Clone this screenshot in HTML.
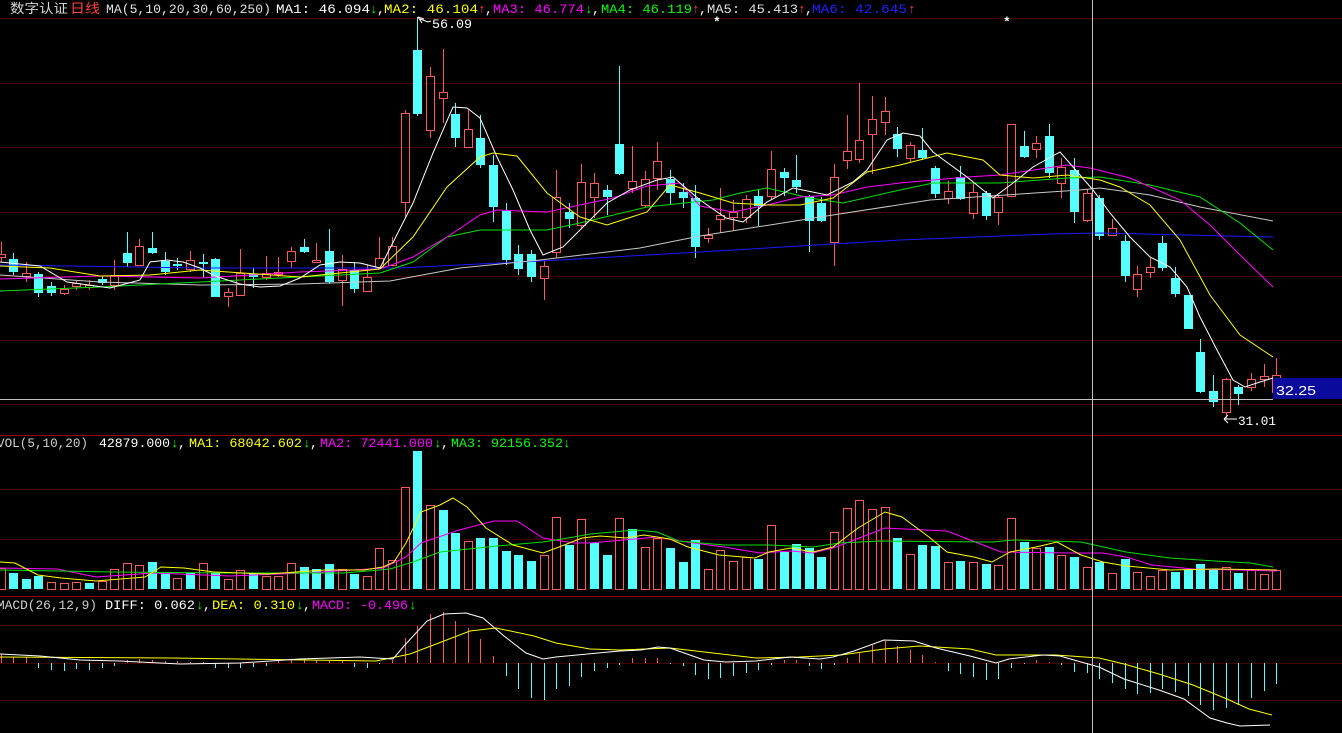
<!DOCTYPE html>
<html><head><meta charset="utf-8">
<style>
html,body{margin:0;padding:0;background:#000;width:1342px;height:733px;overflow:hidden}
svg{display:block}
text{font-family:"Liberation Mono","Noto Sans CJK SC",monospace;font-size:13px}
</style></head>
<body>
<svg id="s" width="1342" height="733" xmlns="http://www.w3.org/2000/svg">
<rect width="1342" height="733" fill="#000"/>
<g id="g"></g>
<text x="10" y="13" textLength="58" lengthAdjust="spacingAndGlyphs" fill="#d8d8d8" style="font-family:'Noto Sans CJK SC',sans-serif">数字认证</text>
<text x="70" y="13" textLength="30" lengthAdjust="spacingAndGlyphs" fill="#ff4040" style="font-family:'Noto Sans CJK SC',sans-serif">日线</text>
<text x="106" y="13" textLength="165" lengthAdjust="spacingAndGlyphs" fill="#e0e0e0">MA(5,10,20,30,60,250)</text>
<text x="276" y="13" textLength="94" lengthAdjust="spacingAndGlyphs" fill="#fff">MA1: 46.094</text>
<text x="370" y="13" fill="#00ff00">↓</text><text x="377" y="13" fill="#fff">,</text>
<text x="384" y="13" textLength="94" lengthAdjust="spacingAndGlyphs" fill="#ffff00">MA2: 46.104</text>
<text x="478" y="13" fill="#ff4040">↑</text><text x="485" y="13" fill="#fff">,</text>
<text x="493" y="13" textLength="91" lengthAdjust="spacingAndGlyphs" fill="#ff00ff">MA3: 46.774</text>
<text x="585" y="13" fill="#00ff00">↓</text><text x="592" y="13" fill="#fff">,</text>
<text x="601" y="13" textLength="91" lengthAdjust="spacingAndGlyphs" fill="#00ff00">MA4: 46.119</text>
<text x="692" y="13" fill="#ff4040">↑</text><text x="699" y="13" fill="#fff">,</text>
<text x="707" y="13" textLength="91" lengthAdjust="spacingAndGlyphs" fill="#e0e0e0">MA5: 45.413</text>
<text x="798" y="13" fill="#ff4040">↑</text><text x="805" y="13" fill="#fff">,</text>
<text x="812" y="13" textLength="95" lengthAdjust="spacingAndGlyphs" fill="#2020ff">MA6: 42.645</text>
<text x="908" y="13" fill="#ff4040">↑</text>
<text x="713" y="26" fill="#fff" font-size="16" font-weight="bold">*</text>
<text x="1003" y="26" fill="#fff" font-size="16" font-weight="bold">*</text>
<text x="-3" y="447" textLength="91" lengthAdjust="spacingAndGlyphs" fill="#d0d0d0">VOL(5,10,20)</text>
<text x="99" y="447" textLength="71" lengthAdjust="spacingAndGlyphs" fill="#fff">42879.000</text>
<text x="171" y="447" fill="#00ff00">↓</text><text x="178" y="447" fill="#fff">,</text>
<text x="189" y="447" textLength="113" lengthAdjust="spacingAndGlyphs" fill="#ffff00">MA1: 68042.602</text>
<text x="303" y="447" fill="#00ff00">↓</text><text x="310" y="447" fill="#fff">,</text>
<text x="320" y="447" textLength="113" lengthAdjust="spacingAndGlyphs" fill="#ff00ff">MA2: 72441.000</text>
<text x="434" y="447" fill="#00ff00">↓</text><text x="441" y="447" fill="#fff">,</text>
<text x="451" y="447" textLength="112" lengthAdjust="spacingAndGlyphs" fill="#00ff00">MA3: 92156.352</text>
<text x="563" y="447" fill="#00ff00">↓</text>
<text x="-3" y="609" textLength="100" lengthAdjust="spacingAndGlyphs" fill="#d0d0d0">MACD(26,12,9)</text>
<text x="105" y="609" textLength="90" lengthAdjust="spacingAndGlyphs" fill="#fff">DIFF: 0.062</text>
<text x="196" y="609" fill="#00ff00">↓</text><text x="203" y="609" fill="#fff">,</text>
<text x="212" y="609" textLength="83" lengthAdjust="spacingAndGlyphs" fill="#ffff00">DEA: 0.310</text>
<text x="296" y="609" fill="#00ff00">↓</text><text x="303" y="609" fill="#fff">,</text>
<text x="312" y="609" textLength="96" lengthAdjust="spacingAndGlyphs" fill="#ff00ff">MACD: -0.496</text>
<text x="409" y="609" fill="#00ff00">↓</text>
<path d="M418 17 L422 23 M418 17 L424 19 M420 19 L428 22 L431 21" stroke="#fff" fill="none"/>
<text x="432" y="28" textLength="40" lengthAdjust="spacingAndGlyphs" fill="#fff">56.09</text>
<path d="M1224 419 L1237 419 M1224 419 L1228 415 M1224 419 L1228 423" stroke="#fff" fill="none"/>
<text x="1238" y="425" textLength="38" lengthAdjust="spacingAndGlyphs" fill="#fff">31.01</text>
<rect x="1273" y="378" width="69" height="21" fill="#0a0a9c"/>
<text x="1276" y="395" font-size="15" textLength="40" lengthAdjust="spacingAndGlyphs" fill="#fff" style="font-family:'Liberation Sans',sans-serif">32.25</text>
</svg>
<script>
var g=document.getElementById("g"),h="";
function L(x1,y1,x2,y2,c,w){h+='<line x1="'+x1+'" y1="'+y1+'" x2="'+x2+'" y2="'+y2+'" stroke="'+c+'" stroke-width="'+(w||1)+'"/>';}
function P(pts,c){h+='<polyline fill="none" stroke="'+c+'" stroke-width="1" points="'+pts+'"/>';}
var GR="#480000",SEP="#a00000";
[18,83,147,212,276,340,404,489,539,625,663,700].forEach(function(y){L(0,y+.5,1342,y+.5,GR);});
L(0,435.5,1342,435.5,SEP);L(0,596.5,1342,596.5,SEP);
var R="#ff5a5a",C="#55ffff";
var K=[["r",254,257,242,262],["c",259,272,253,275],["r",273,276,262,282],["c",274,293,272,297],["c",286,293,282,296],["r",289,293,285,295],["r",283,286,281,290],["r",285,287,280,290],["c",279,283,276,285],["r",275,285,260,290],
["c",253,263,232,267],["r",246,265,239,266],["c",248,253,232,254],["c",261,272,252,275],["c",264,266,258,270],["r",260,269,251,272],["c",262,264,254,277],["c",259,297,258,297],["r",292,296,288,307],["r",273,295,249,296],
["c",274,277,268,288],["r",273,277,256,280],["r",272,274,257,277],["r",251,261,247,268],["c",247,252,239,253],["r",260,262,243,262],["c",251,282,229,284],["r",269,280,255,306],["c",270,289,262,293],["r",277,291,265,291],
["r",258,267,237,268],["r",246,265,237,266],["r",113,202,110,217],["c",50,114,17,116],["r",76,130,67,138],["r",92,98,49,123],["c",114,138,103,147],["r",129,147,110,148],["c",138,165,115,168],["c",165,207,155,222],
["c",211,260,203,265],["c",254,269,245,275],["c",254,277,250,282],["r",266,278,261,300],["r",197,252,170,258],["c",212,219,203,228],["r",182,225,164,228],["r",183,197,173,218],["c",190,197,185,215],["c",144,174,66,175],
["r",181,188,146,193],["r",179,205,171,207],["r",161,178,142,190],["c",179,193,170,205],["c",192,198,183,208],["c",198,247,185,258],["r",235,238,228,243],["r",215,219,188,233],["r",212,217,200,230],["r",199,217,195,223],
["c",196,206,190,226],["r",169,196,151,200],["c",172,178,168,196],["c",180,187,155,193],["c",196,221,195,252],["c",203,221,197,222],["r",177,242,164,266],["r",151,160,115,169],["r",140,159,83,163],["r",119,134,96,174],
["r",111,122,97,135],["c",134,149,127,157],["r",145,158,142,162],["c",150,158,128,160],["c",168,194,166,198],["r",191,198,181,204],["c",177,199,166,200],["r",192,213,182,219],["c",193,216,191,220],["r",197,212,196,225],
["r",124,196,124,196],["c",146,157,131,158],["r",143,149,136,158],["c",136,173,124,178],["r",167,183,158,198],["c",170,212,158,223],["r",193,220,189,222],["c",198,236,195,240],["r",228,235,219,235],["c",241,276,235,282],
["r",274,289,266,297],["r",267,272,258,278],["c",243,268,236,271],["c",278,294,267,297],["c",295,329,295,329],["c",352,392,339,393],["c",391,402,375,407],["r",379,412,378,419],["c",387,394,385,405],["r",379,387,373,391],
["r",376,379,364,387],["r",375,392,358,393]];
var V="r568 c573 c579 c576 r582 r583 r582 c583 r581 r569 r563 r565 c562 c572 r578 c573 r563 c573 r579 r570 c573 r576 r576 r563 c567 c569 c564 r569 c574 r576 r548 r560 r487 c451 r505 c510 c533 r541 c538 c538 c551 c555 c561 r555 r517 c545 r519 c543 c555 r518 c529 r547 r538 c548 c562 c540 r569 r550 r561 r557 c559 r525 c552 c544 c548 c557 r532 r508 r500 r509 r507 c538 r554 c545 c546 r562 c561 r562 c564 r565 r518 c542 r548 c547 r555 c557 r567 c562 r573 c559 r572 r576 r570 c572 c570 c564 c570 r567 c573 r570 r574 r570".split(" ");
var M=[654,657,657,668,670,671,669,670,668,666,660,659,660,661,661,662,662,668,668,668,667,666,660,660,659,660,661,660,667,668,664,660,638,626,614,612,621,628,639,656,676,689,698,700,689,686,677,671,668,665,658,658,658,664,666,675,679,678,676,673,670,665,660,660,666,669,665,658,652,645,641,646,650,655,662,671,674,677,680,679,668,664,660,662,665,672,673,679,683,689,694,693,689,692,696,705,710,708,705,698,691,684];
for(var i=0;i<K.length;i++){
 var x=Math.round(0.5+12.63*i)+.5,k=K[i],col=k[0]=="r"?R:C;
 if(k[0]=="c"){L(x,k[3],x,k[4],col);h+='<rect x="'+(x-4.5)+'" y="'+k[1]+'" width="9" height="'+Math.max(1,k[2]-k[1])+'" fill="'+col+'"/>';}
 else{ if(k[3]<k[1])L(x,k[3],x,k[1],col); if(k[4]>k[2])L(x,k[2],x,k[4],col);
  h+='<rect x="'+(x-4)+'" y="'+(k[1]+.5)+'" width="8" height="'+Math.max(1,k[2]-k[1])+'" fill="none" stroke="'+col+'"/>';}
 var v=V[i],vt=+v.slice(1);
 if(v[0]=="c")h+='<rect x="'+(x-4.5)+'" y="'+vt+'" width="9" height="'+(589-vt)+'" fill="'+C+'"/>';
 else h+='<rect x="'+(x-4)+'" y="'+(vt+.5)+'" width="8" height="'+(589-vt)+'" fill="none" stroke="'+R+'"/>';
 var m=M[i];if(Math.abs(m-663)>0)L(x,663,x,m,m<663?R:C);
}
P("0,265 200,268 400,268 560,260 700,252 900,240 1050,234 1100,233 1273,237","#1a1aff");
P("0,275 100,282 200,285 300,284 390,281 460,268 540,260 640,248 700,236 833,215 930,200 1080,190 1100,188 1150,195 1200,207 1273,221","#c8c8c8");
P("0,291 100,287 200,282 300,277 380,273 413,262 447,237 480,230 547,230 580,223 647,207 713,200 740,193 767,188 810,198 843,203 900,190 933,183 1000,183 1067,178 1100,177 1150,185 1200,197 1240,223 1273,250","#00e000");
P("0,279 100,276 200,278 300,272 380,269 413,257 447,237 480,215 497,210 547,212 580,205 613,198 647,186 680,183 700,206 733,212 767,205 800,197 833,195 867,187 900,183 967,177 1000,175 1067,165 1090,168 1130,178 1180,200 1210,225 1240,255 1273,287","#ff00ff");
P("0,266 50,268 100,276 150,275 200,270 300,277 380,269 413,237 447,187 480,157 493,153 517,156 547,193 580,217 607,225 647,212 670,185 700,193 733,203 767,205 800,205 833,198 867,172 900,165 947,153 983,160 1000,175 1033,178 1067,175 1100,180 1120,187 1150,205 1180,240 1210,295 1240,335 1273,357","#ffff00");
P("0,262 40,266 67,282 110,288 140,280 150,262 167,260 183,262 200,268 215,276 240,284 260,287 280,286 300,278 320,265 340,262 360,263 380,268 413,203 433,153 453,107 467,108 480,118 497,157 513,190 530,230 543,255 563,247 587,223 607,203 630,190 657,180 673,177 700,200 726,218 743,222 767,202 793,188 827,195 853,182 867,170 887,140 903,133 920,136 933,152 967,177 993,198 1013,183 1033,167 1060,152 1093,190 1110,213 1130,237 1150,257 1170,267 1187,287 1200,317 1217,350 1233,380 1245,387 1260,382 1273,378","#fff");
P("0,568 57,569 96,577 153,573 230,576 306,573 383,568 406,557 421,543 459,530 494,521 517,521 543,538 574,543 590,543 657,537 679,541 724,547 760,553 791,551 813,553 836,547 862,537 885,528 947,531 978,543 1001,552 1072,553 1103,553 1126,557 1152,565 1193,569 1277,571","#ff00ff");
P("0,570 115,572 230,573 344,573 390,569 413,562 440,552 497,546 543,542 574,537 590,534 635,530 657,532 679,541 724,545 769,545 813,547 840,543 880,541 992,542 1014,540 1081,542 1126,552 1170,558 1215,561 1251,563 1273,567","#00e000");
P("0,562 15,563 38,575 61,578 96,581 145,577 161,567 184,568 214,572 268,574 325,570 364,570 383,567 394,562 406,543 421,512 440,505 453,498 467,507 486,528 513,545 543,553 559,547 582,538 600,536 626,538 644,535 670,539 688,547 719,555 755,558 769,552 791,548 813,552 833,547 858,528 885,512 902,517 929,537 947,552 974,557 992,562 1010,552 1036,547 1057,542 1081,555 1103,562 1126,566 1170,570 1215,569 1277,570","#ffff00");
P("0,657 171,658 376,661 410,654 444,641 470,631 496,628 534,636 556,643 590,649 620,650 670,648 713,653 756,658 799,657 841,655 884,649 919,646 970,649 996,655 1056,655 1099,658 1124,664 1159,674 1193,685 1227,699 1249,709 1272,715","#ffff00");
P("0,654 40,656 80,660 120,661 180,664 240,663 300,659 360,657 393,659 404,646 427,621 444,614 466,613 483,618 504,636 526,653 543,659 556,657 577,655 598,653 620,651 641,650 658,647 670,648 687,654 704,660 726,662 756,661 790,657 820,659 833,657 854,651 884,640 914,641 936,648 970,656 996,663 1009,659 1043,655 1060,656 1081,662 1099,667 1124,679 1159,690 1184,699 1210,718 1227,723 1240,726 1270,725","#fff");
L(1092.5,0,1092.5,733,"#c0c0c0");
L(0,399.5,1273,399.5,"#c0c0c0");
g.innerHTML=h;
</script>
</body></html>
